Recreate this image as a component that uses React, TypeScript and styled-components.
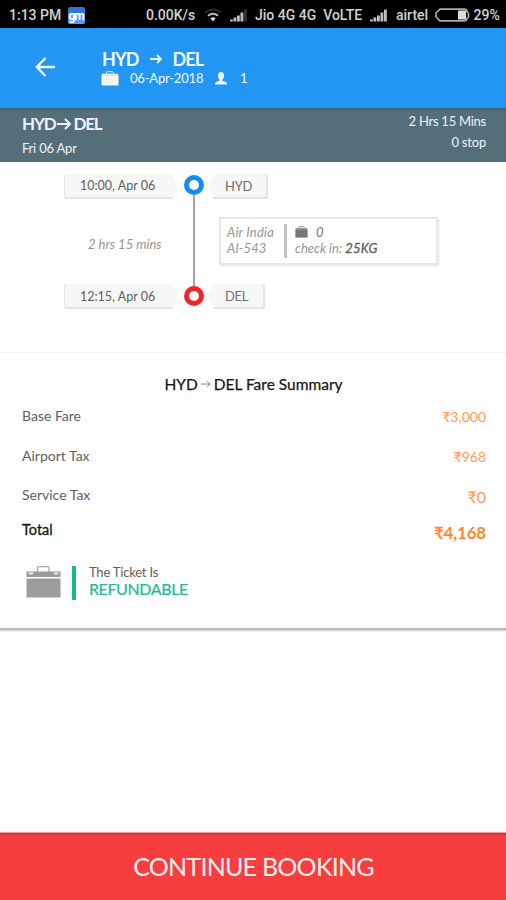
import React from "react";
import styled, { createGlobalStyle } from "styled-components";

const GlobalStyle = createGlobalStyle`
  * { box-sizing: border-box; }
  html, body { margin: 0; background: #fff; }
  body { font-family: Lato, "Open Sans", sans-serif; }
`;

const Screen = styled.main`
  width: 506px;
  height: 900px;
  display: flex;
  flex-direction: column;
  overflow: hidden;
  background: #fefefe;
`;

const Label = styled.span<{
  $size: number;
  $line: number;
  $color?: string;
  $weight?: number;
  $spacing?: number;
  $italic?: boolean;
  $stroke?: number;
}>`
  display: block;
  white-space: nowrap;
  font-size: ${(p) => p.$size}px;
  line-height: ${(p) => p.$line}px;
  color: ${(p) => p.$color ?? "inherit"};
  font-weight: ${(p) => p.$weight ?? 400};
  letter-spacing: ${(p) => p.$spacing ?? 0}px;
  font-style: ${(p) => (p.$italic ? "italic" : "normal")};
  -webkit-text-stroke: ${(p) => p.$stroke ?? 0}px currentColor;
`;

const StatusBar = styled.div`
  height: 28px;
  flex: none;
  display: flex;
  align-items: center;
  padding: 2px 8px 0 9px;
  background: #000;
  color: #d2d2d2;
  font: 500 14px/26px Roboto, sans-serif;
  white-space: nowrap;
  svg { flex: none; display: block; }
`;

const StatusText = styled.span<{ $width: number; $gap?: number }>`
  flex: none;
  width: ${(p) => p.$width}px;
  margin-right: ${(p) => p.$gap ?? 0}px;
`;

const GmBadge = styled.span`
  flex: none;
  width: 17px;
  height: 17px;
  margin-right: 61px;
  border-radius: 2px;
  background: linear-gradient(#3274d8 0 35%, #5b9cf2 35%);
  color: #fff;
  font: 700 12px/19px Roboto, sans-serif;
  letter-spacing: -1px;
  text-indent: -1px;
  text-align: center;
`;

const AppBar = styled.header`
  height: 79.5px;
  flex: none;
  display: flex;
  padding-top: 20px;
  background: #2196f3;
  color: #f1f8ff;
`;

const BackButton = styled.button`
  width: 101px;
  height: 38px;
  padding: 0 0 0 35px;
  border: 0;
  background: none;
  color: inherit;
  svg { display: block; }
`;

const Row = styled.div<{ $gap?: number }>`
  display: flex;
  align-items: center;
  gap: ${(p) => p.$gap ?? 0}px;
  svg { flex: none; }
`;

const TitleRow = styled(Row)`
  padding: 1px 0 0 1px;
`;

const DateText = styled(Label)`
  width: 73px;
  margin: 0 12px 0 11px;
`;

const Passengers = styled(Label)`
  margin-left: 13px;
`;

const RouteBar = styled.section`
  height: 54.5px;
  flex: none;
  display: flex;
  justify-content: space-between;
  padding: 4px 20px 0 22px;
  background: #546e7a;
  box-shadow: inset 0 3px 3px -1px #40606f;
  color: #eef3f6;
`;

const StopInfo = styled.div`
  text-align: right;
`;

const Timeline = styled.section`
  height: 191px;
  flex: none;
  display: grid;
  grid-template-columns: 115px 19px 235px;
  column-gap: 5px;
  padding: 12px 0 43px 64px;
  border-bottom: 1px solid #f4f4f4;
`;

const TimeColumn = styled.div`
  display: flex;
  flex-direction: column;
  justify-content: space-between;
`;

const Track = styled.div`
  display: flex;
  flex-direction: column;
  align-items: center;
  padding: 1px 0 3px;
`;

const Dot = styled.span<{ $color: string }>`
  width: 20px;
  height: 20px;
  flex: none;
  border: 5.5px solid ${(p) => p.$color};
  border-radius: 50%;
  background: #fff;
`;

const TrackLine = styled.span`
  width: 2px;
  flex: 1;
  background: #a5a5a5;
`;

const Pill = styled.div<{ $width: number; $side: "left" | "right" }>`
  width: ${(p) => p.$width}px;
  height: 25px;
  padding-left: ${(p) => (p.$side === "left" ? 16 : 17)}px;
  background: #f7f7f7;
  clip-path: ${(p) =>
    p.$side === "left"
      ? "polygon(-4px -4px, 106px -4px, 114px 12px, 106px 29px, -4px 29px)"
      : "polygon(8px -4px, calc(100% + 4px) -4px, calc(100% + 4px) 29px, 8px 29px, 0 12px)"};
  border-radius: 3px;
  box-shadow: ${(p) =>
    p.$side === "left"
      ? "inset 1px 0 #e7e7e7, inset 0 -2px 1px #e4e4e4"
      : "inset -2px 0 1px #e4e4e4, inset 0 -2px 1px #e4e4e4"};
`;

const Duration = styled.div`
  padding: 4px 0 0 24px;
`;

const FlightCard = styled.article`
  width: 219px;
  height: 48px;
  margin: 0 0 2px 11px;
  display: flex;
  padding: 5px 6px;
  border: 2px solid #e6e6e6;
  box-shadow: 1px 1px 2px #e5e5e5;
  background: #fff;
`;

const FlightName = styled.div`
  width: 57px;
`;

const Divider = styled.span<{ $color: string; $width: number; $height: number }>`
  flex: none;
  width: ${(p) => p.$width}px;
  height: ${(p) => p.$height}px;
  background: ${(p) => p.$color};
`;

const Baggage = styled.div`
  padding-left: 8px;
`;

const Weight = styled.b`
  color: #666;
  font-weight: 400;
  letter-spacing: 0.2px;
  -webkit-text-stroke: 0.3px #555;
`;

const FareCard = styled.section`
  height: 277px;
  flex: none;
  padding: 20px 20px 0 22px;
  background: #fefefe;
  border-bottom: 2px solid #b9b9b9;
  box-shadow: 0 1px 2px #ccc;
`;

const FareTitle = styled.div`
  display: flex;
  justify-content: center;
  align-items: center;
  height: 22px;
  gap: 3px;
  margin-bottom: 10px;
  padding-right: 1px;
`;

const FareRow = styled.div<{ $height: number }>`
  display: flex;
  justify-content: space-between;
  height: ${(p) => p.$height}px;
`;

const Amount = styled.div<{ $shift: number }>`
  padding-top: ${(p) => p.$shift}px;
`;

const Refund = styled.div`
  display: flex;
  padding: 14px 0 0 4px;
  svg { flex: none; margin-right: 11px; }
`;

const RefundText = styled.div`
  padding-left: 13px;
  margin-top: -1px;
`;

const ContinueButton = styled.button`
  height: 67px;
  flex: none;
  margin-top: auto;
  padding: 0 0 4px 1px;
  display: flex;
  justify-content: center;
  align-items: center;
  border: 0;
  border-top: 2px solid #e33337;
  box-shadow: 0 -1px 1px #e9a0a0;
  background: #f73e3e;
  color: #fff0ee;
  font-family: inherit;
`;

type ArrowProps = { w: number; h: number; stroke: number; color?: string };

function Arrow({ w, h, stroke, color = "currentColor" }: ArrowProps) {
  const m = h / 2;
  return (
    <svg width={w} height={h} viewBox={`0 0 ${w} ${h}`} fill="none" stroke={color} strokeWidth={stroke}>
      <path d={`M0 ${m}H${w - 1}M${w - m} 1L${w - 1} ${m}L${w - m} ${h - 1}`} />
    </svg>
  );
}

function Signal({ bars }: { bars: number }) {
  return (
    <svg width="18" height="14" viewBox="0 0 18 14">
      {[2, 4, 6, 9, 12].map((h, i) => (
        <rect key={h} x={i * 3.5} y={13.5 - h} width="2.8" height={h} fill={i < bars ? "#c0c0c0" : "#333"} />
      ))}
    </svg>
  );
}

function Wifi() {
  return (
    <svg width="18" height="14" viewBox="0 0 18 14" fill="none">
      <path d="M1 4.5Q9-2 17 4.5" stroke="#2c2c2c" strokeWidth="2" />
      <path d="M4 7.8Q9 3.6 14 7.8" stroke="#bbb" strokeWidth="2" />
      <path d="M6.4 10.2Q9 8.2 11.6 10.2L9 13.5Z" fill="#ddd" />
    </svg>
  );
}

function Battery() {
  return (
    <svg width="35" height="14" viewBox="0 0 35 14">
      <path d="M5 1.2H29.5Q31.5 1.2 32 3.5L33.5 5V9L32 10.5Q31.5 12.8 29.5 12.8H5L1 9V5Z" fill="none" stroke="#aaa" strokeWidth="1.7" strokeLinejoin="round" />
      <rect x="23" y="2.5" width="8" height="9" fill="#ddd" />
    </svg>
  );
}

function SmallCase({ w, h, color }: { w: number; h: number; color: string }) {
  return (
    <svg width={w} height={h} viewBox="0 0 18 15" preserveAspectRatio="none">
      <path d="M5.5 3V1.5Q5.5.7 6.5.7H11.5Q12.5.7 12.5 1.5V3" fill="none" stroke={color} strokeWidth="1" />
      <path d="M1 2.7H17L17.5 4.8H.5Z" fill={color} />
      <rect x=".5" y="4.7" width="17" height="9.8" fill={color} />
    </svg>
  );
}

function Suitcase() {
  return (
    <svg width="35" height="34" viewBox="0 0 35 34">
      <path d="M11.5 6V1.7Q11.5.7 13 .7H21.5Q23 .7 23 1.7V6" fill="none" stroke="#aaa" strokeWidth="1.3" />
      <path d="M.5 5.5H34.5V11H.5Z" fill="#999" />
      <path d="M2 6.5H8Q7 9 5 8.8Q3 8.8 2 6.5ZM27 6.5H33Q32 8.8 30 8.8Q28 9 27 6.5Z" fill="#ededed" />
      <rect x=".5" y="12.5" width="34" height="19" fill="#9c9c9c" />
    </svg>
  );
}

const fares = [
  { name: "Base Fare", amount: "₹3,000", size: 14, height: 39.5, shift: 1 },
  { name: "Airport Tax", amount: "₹968", size: 14, height: 39, shift: 1 },
  { name: "Service Tax", amount: "₹0", size: 16, height: 38, shift: 2 },
];

export default function App() {
  return (
    <>
      <GlobalStyle />
      <Screen>
        <StatusBar>
          <StatusText $width={59}>1:13 PM</StatusText>
          <GmBadge>gm</GmBadge>
          <StatusText $width={50} $gap={8}>0.00K/s</StatusText>
          <Wifi />
          <StatusText $width={8} />
          <Signal bars={4} />
          <StatusText $width={7} />
          <StatusText $width={115}>Jio 4G 4G&nbsp; VoLTE</StatusText>
          <Signal bars={5} />
          <StatusText $width={8} />
          <StatusText $width={39}>airtel</StatusText>
          <Battery />
          <StatusText $width={28} $gap={-6}>&nbsp;29%</StatusText>
        </StatusBar>

        <AppBar>
          <BackButton aria-label="Back">
            <svg width="22" height="38" viewBox="0 0 22 38" fill="none" stroke="currentColor" strokeWidth="2.4">
              <path d="M20 19H2M10.5 10L1.8 19L10.5 28" />
            </svg>
          </BackButton>
          <div>
            <TitleRow $gap={11}>
              <Label $size={18} $line={20} $weight={700} $spacing={-0.9}>HYD</Label>
              <Arrow w={12} h={10} stroke={1.8} />
              <Label $size={18} $line={20} $weight={700} $spacing={-0.9}>DEL</Label>
            </TitleRow>
            <Row>
              <SmallCase w={18} h={15} color="#f7f5ed" />
              <DateText $size={13} $line={19} $spacing={-0.2}>06-Apr-2018</DateText>
              <svg width="12" height="13" viewBox="0 0 12 13" fill="currentColor">
                <path d="M6 0C8 0 9 1.3 9 3.5C9 5.5 8.3 6.7 7.5 7.5V9C10.5 9.5 12 10.3 12 12.5H0C0 10.3 1.5 9.5 4.5 9V7.5C3.7 6.7 3 5.5 3 3.5C3 1.3 4 0 6 0Z" />
              </svg>
              <Passengers $size={13} $line={19}>1</Passengers>
            </Row>
          </div>
        </AppBar>

        <RouteBar>
          <div>
            <Row $gap={2}>
              <Label $size={17} $line={24} $weight={700} $spacing={-1.2}>HYD</Label>
              <Arrow w={14} h={12} stroke={2} />
              <Label $size={17} $line={24} $weight={700} $spacing={-1.2}>DEL</Label>
            </Row>
            <Label $size={13} $line={24} $spacing={-0.2}>Fri 06 Apr</Label>
          </div>
          <StopInfo>
            <Label $size={13} $line={19} $spacing={-0.25}>2 Hrs 15 Mins</Label>
            <Label $size={13} $line={23} $spacing={-0.2}>0 stop</Label>
          </StopInfo>
        </RouteBar>

        <Timeline>
          <TimeColumn>
            <Pill $width={115} $side="left">
              <Label $size={12.5} $line={24} $color="#606060">10:00, Apr 06</Label>
            </Pill>
            <Duration>
              <Label $size={13} $line={24} $color="#959595" $italic>2 hrs 15 mins</Label>
            </Duration>
            <Pill $width={115} $side="left">
              <Label $size={12.5} $line={25} $color="#606060">12:15, Apr 06</Label>
            </Pill>
          </TimeColumn>
          <Track>
            <Dot $color="#188bee" />
            <TrackLine />
            <Dot $color="#ef2529" />
          </Track>
          <TimeColumn>
            <Pill $width={60} $side="right">
              <Label $size={13} $line={24} $color="#707070" $spacing={-0.3}>HYD</Label>
            </Pill>
            <FlightCard>
              <FlightName>
                <Label $size={13} $line={16.5} $color="#959595" $spacing={0.2} $italic>Air India</Label>
                <Label $size={13} $line={17} $color="#959595" $spacing={0.1} $italic>AI-543</Label>
              </FlightName>
              <Divider $color="#bcc4c7" $width={3} $height={34} />
              <Baggage>
                <Row $gap={8}>
                  <SmallCase w={13} h={12} color="#777" />
                  <Label $size={13} $line={16.5} $color="#777" $italic>0</Label>
                </Row>
                <Label $size={13} $line={17} $color="#959595" $italic>check in: <Weight>25KG</Weight></Label>
              </Baggage>
            </FlightCard>
            <Pill $width={57} $side="right">
              <Label $size={13} $line={24} $color="#707070" $spacing={-0.3}>DEL</Label>
            </Pill>
          </TimeColumn>
        </Timeline>

        <FareCard>
          <FareTitle>
            <Label $size={15.5} $line={22} $color="#181818" $stroke={0.25}>HYD</Label>
            <Arrow w={10} h={8} stroke={0.8} color="#666" />
            <Label $size={15.5} $line={22} $color="#181818" $stroke={0.25}>DEL Fare Summary</Label>
          </FareTitle>
          {fares.map((f) => (
            <FareRow key={f.name} $height={f.height}>
              <Label $size={14} $line={22} $color="#606060">{f.name}</Label>
              <Amount $shift={f.shift}>
                <Label $size={f.size} $line={22} $color="#ff995f">{f.amount}</Label>
              </Amount>
            </FareRow>
          ))}
          <FareRow $height={30}>
            <Label $size={14.5} $line={15} $color="#181818" $stroke={0.3}>Total</Label>
            <Amount $shift={0}>
              <Label $size={17} $line={21} $color="#fa8735" $weight={700} $spacing={-0.2}>₹4,168</Label>
            </Amount>
          </FareRow>
          <Refund>
            <Suitcase />
            <Divider $color="#18b894" $width={4} $height={34} />
            <RefundText>
              <Label $size={13} $line={14} $color="#606060" $spacing={-0.2}>The Ticket Is</Label>
              <Label $size={16} $line={19} $color="#20b996" $spacing={-0.4} $stroke={0.2}>REFUNDABLE</Label>
            </RefundText>
          </Refund>
        </FareCard>

        <ContinueButton>
          <Label $size={25} $line={30} $spacing={-0.75}>CONTINUE BOOKING</Label>
        </ContinueButton>
      </Screen>
    </>
  );
}
